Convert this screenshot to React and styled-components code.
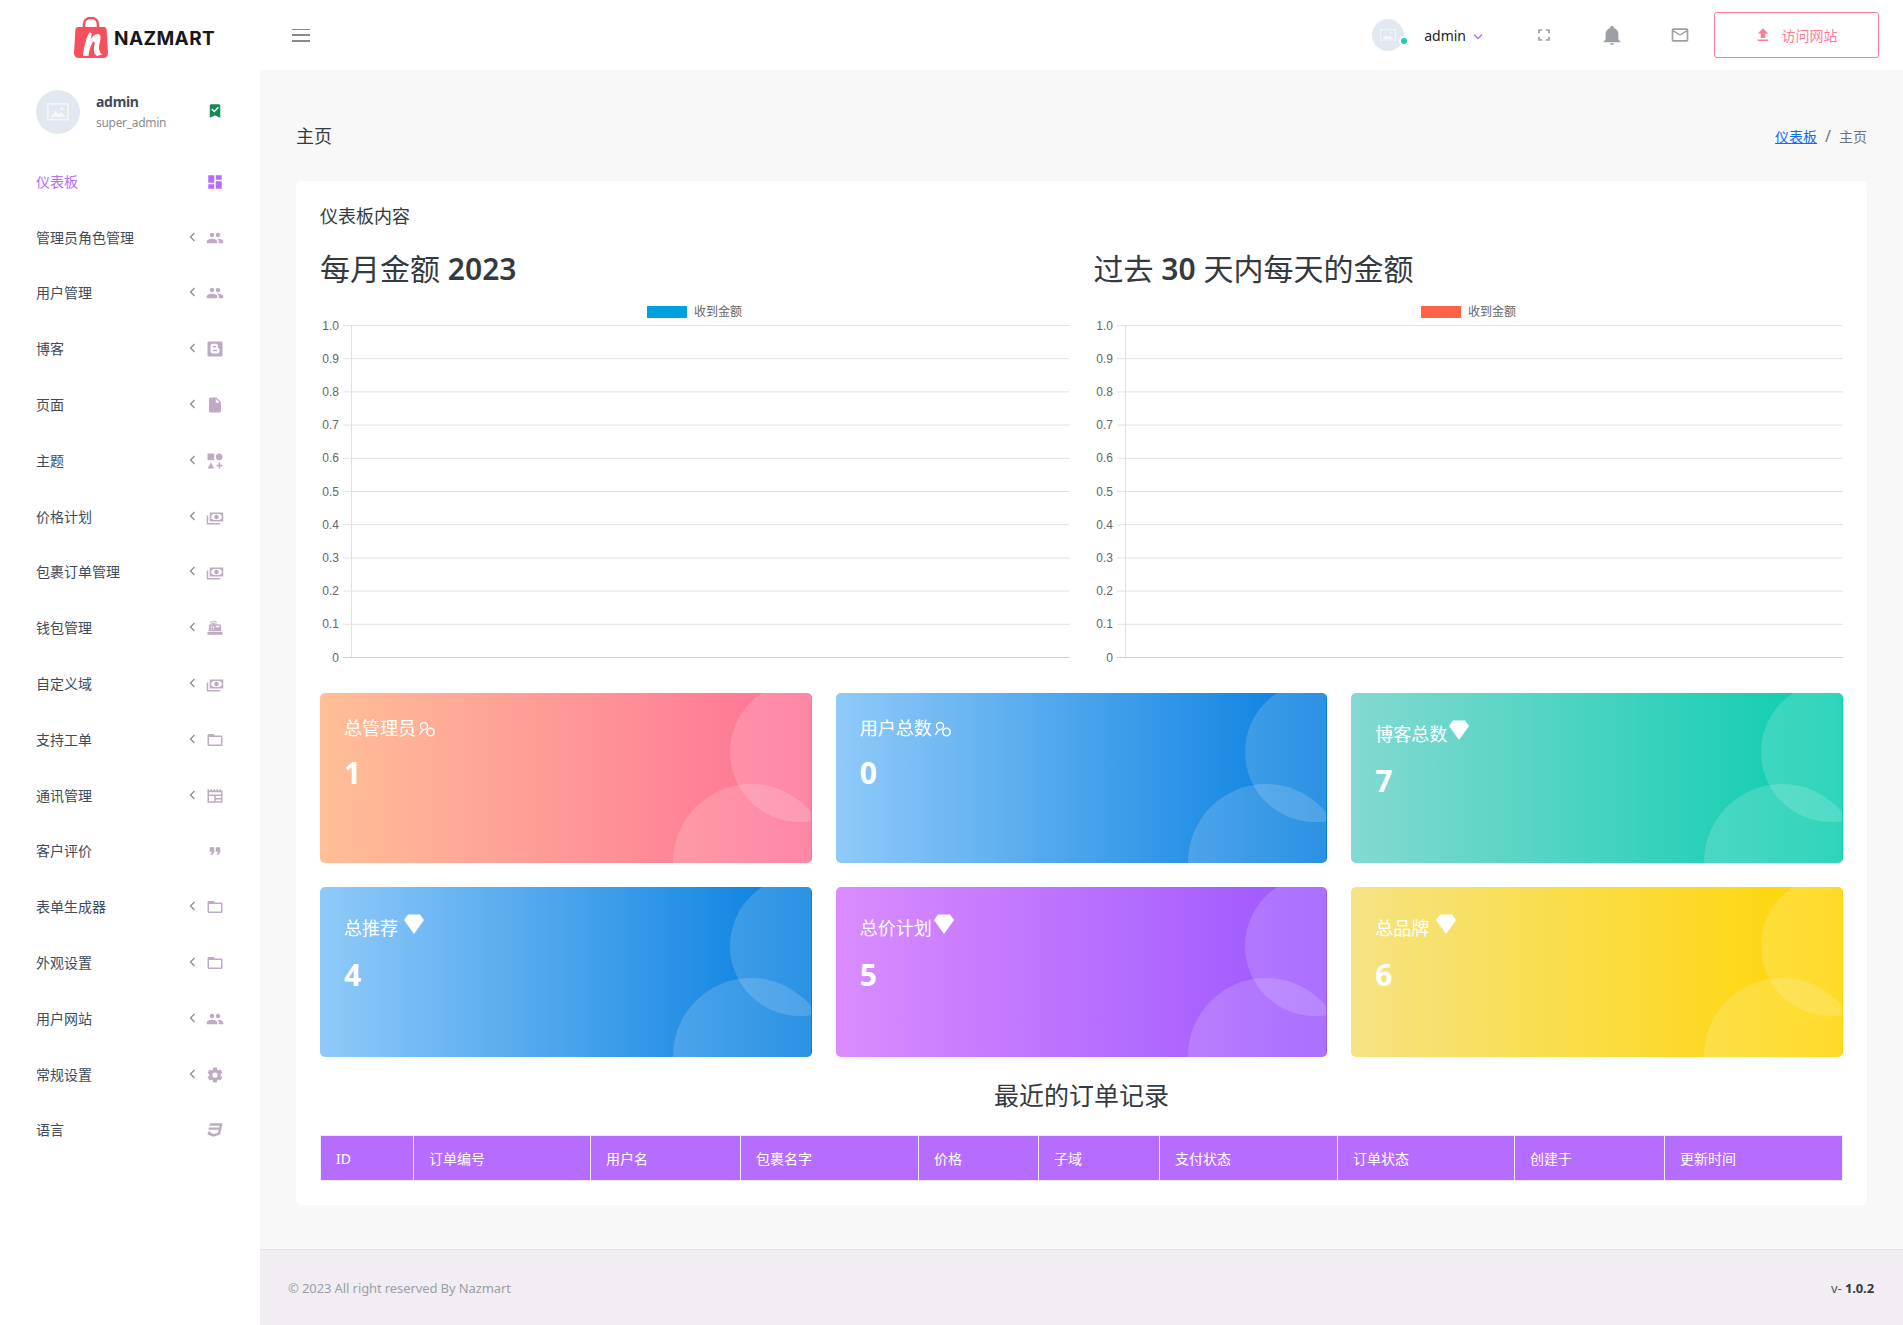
import styled, { createGlobalStyle } from 'styled-components'

const GlobalStyle = createGlobalStyle`
    * { box-sizing: border-box; }
    body {
        margin: 0;
        background: #f8f8f8;
        font-family: "Noto Sans", "Noto Sans CJK SC", sans-serif;
        color: #343a40;
    }
`;

const icons = {
    dashboard: 'M13,3V9H21V3M13,21H21V11H13M3,21H11V15H3M3,13H11V3H3V13Z',
    people: 'M16 11c1.66 0 2.99-1.34 2.99-3S17.66 5 16 5c-1.66 0-3 1.34-3 3s1.34 3 3 3zm-8 0c1.66 0 2.99-1.34 2.99-3S9.66 5 8 5C6.34 5 5 6.34 5 8s1.34 3 3 3zm0 2c-2.33 0-7 1.17-7 3.5V19h14v-2.5c0-2.33-4.67-3.5-7-3.5zm8 0c-.29 0-.62.02-.97.05 1.16.84 1.97 1.97 1.97 3.45V19h6v-2.5c0-2.33-4.67-3.5-7-3.5z',
    blogger: 'M14,13H9.95A1,1 0 0,0 8.95,14A1,1 0 0,0 9.95,15H14A1,1 0 0,0 15,14A1,1 0 0,0 14,13M9.95,10H12.55A1,1 0 0,0 13.55,9A1,1 0 0,0 12.55,8H9.95A1,1 0 0,0 8.95,9A1,1 0 0,0 9.95,10M16,9V10A1,1 0 0,0 17,11A1,1 0 0,1 18,12V15A3,3 0 0,1 15,18H9A3,3 0 0,1 6,15V8A3,3 0 0,1 9,5H13A3,3 0 0,1 16,8M20,2H4C2.89,2 2,2.89 2,4V20A2,2 0 0,0 4,22H20A2,2 0 0,0 22,20V4C22,2.89 21.1,2 20,2Z',
    file: 'M13,9V3.5L18.5,9M6,2C4.89,2 4,2.89 4,4V20A2,2 0 0,0 6,22H18A2,2 0 0,0 20,20V8L14,2H6Z',
    shapes: 'M2,2H11V11H2V2M17.5,2C20,2 22,4 22,6.5C22,9 20,11 17.5,11C15,11 13,9 13,6.5C13,4 15,2 17.5,2M6.5,14L11,22H2L6.5,14M19,17H22V19H19V22H17V19H14V17H17V14H19V17Z',
    cash: 'M5,6H23V18H5V6M14,9A3,3 0 0,1 17,12A3,3 0 0,1 14,15A3,3 0 0,1 11,12A3,3 0 0,1 14,9M9,8A2,2 0 0,1 7,10V14A2,2 0 0,1 9,16H19A2,2 0 0,1 21,14V10A2,2 0 0,1 19,8H9M1,10H3V20H19V22H1V10Z',
    register: 'M2,17H22V21H2V17M6.25,7H9V6H6V3H14V6H11V7H17.8C18.8,7 19.8,8 20,9L20.5,16H3.5L4.05,9C4.1,8 5.05,7 6.25,7M13,9V11H18V9H13M6,9V10H8V9H6M9,9V10H11V9H9M6,11V12H8V11H6M9,11V12H11V11H9M6,13V14H8V13H6M9,13V14H11V13H9M7,4V5H13V4H7Z',
    folder: 'M20,18H4V8H20M20,6H12L10,4H4C2.89,4 2,4.89 2,6V18A2,2 0 0,0 4,20H20A2,2 0 0,0 22,18V8C22,6.89 21.1,6 20,6Z',
    news: 'M2,3H4V4.5H6V3H8V4.5H10V3H12V4.5H14V3H16V4.5H18V3H20V4.5H22V21H2V3M4,7V10H20V7H4M4,12V19H11V12H4M13,12V14.5H20V12H13M13,16.5V19H20V16.5H13Z',
    quote: 'M14,17H17L19,13V7H13V13H16M6,17H9L11,13V7H5V13H8L6,17Z',
    settings: 'M12,15.5A3.5,3.5 0 0,1 8.5,12A3.5,3.5 0 0,1 12,8.5A3.5,3.5 0 0,1 15.5,12A3.5,3.5 0 0,1 12,15.5M19.43,12.97C19.47,12.65 19.5,12.33 19.5,12C19.5,11.67 19.47,11.34 19.43,11L21.54,9.37C21.73,9.22 21.78,8.95 21.66,8.73L19.66,5.27C19.54,5.05 19.27,4.96 19.05,5.05L16.56,6.05C16.04,5.66 15.5,5.32 14.87,5.07L14.5,2.42C14.46,2.18 14.25,2 14,2H10C9.75,2 9.54,2.18 9.5,2.42L9.13,5.07C8.5,5.32 7.96,5.66 7.44,6.05L4.95,5.05C4.73,4.96 4.46,5.05 4.34,5.27L2.34,8.73C2.21,8.95 2.27,9.22 2.46,9.37L4.57,11C4.53,11.34 4.5,11.67 4.5,12C4.5,12.33 4.53,12.65 4.57,12.97L2.46,14.63C2.27,14.78 2.21,15.05 2.34,15.27L4.34,18.73C4.46,18.95 4.73,19.03 4.95,18.95L7.44,17.94C7.96,18.34 8.5,18.68 9.13,18.93L9.5,21.58C9.54,21.82 9.75,22 10,22H14C14.25,22 14.46,21.82 14.5,21.58L14.87,18.93C15.5,18.67 16.04,18.34 16.56,17.94L19.05,18.95C19.27,19.03 19.54,18.95 19.66,18.73L21.66,15.27C21.78,15.05 21.73,14.78 21.54,14.63L19.43,12.97Z',
    css: 'M5,3L4.35,6.34H17.94L17.5,8.5H3.92L3.26,11.83H16.85L16.09,15.64L10.61,17.45L5.86,15.64L6.19,14H2.85L2.06,18L9.91,21L18.96,18L20.16,11.97L20.4,10.76L21.94,3H5Z',
    bookmark: 'M17,3A2,2 0 0,1 19,5V21L12,18L5,21V5C5,3.89 5.9,3 7,3H17M11,14L17.25,7.76L15.84,6.34L11,11.18L8.41,8.59L7,10L11,14Z',
    bell: 'M21,19V20H3V19L5,17V11C5,7.9 7.03,5.17 10,4.29C10,4.19 10,4.1 10,4A2,2 0 0,1 12,2A2,2 0 0,1 14,4C14,4.1 14,4.19 14,4.29C16.97,5.17 19,7.9 19,11V17L21,19M14,21A2,2 0 0,1 12,23A2,2 0 0,1 10,21',
    mail: 'M22,6C22,4.9 21.1,4 20,4H4C2.9,4 2,4.9 2,6V18C2,19.1 2.9,20 4,20H20C21.1,20 22,19.1 22,18V6M20,6L12,11L4,6H20M20,18H4V8L12,13L20,8V18Z',
    fullscreen: 'M5,5H10V7H7V10H5V5M14,5H19V10H17V7H14V5M17,14H19V19H14V17H17V14M10,17V19H5V14H7V17H10Z',
    upload: 'M9,16V10H5L12,3L19,10H15V16H9M5,20V18H19V20H5Z',
    diamond: 'M6,2.5H18L22,8L12,22L2,8L6,2.5Z',
};

const menu = [
    { label: '仪表板', icon: 'dashboard', active: true },
    { label: '管理员角色管理', icon: 'people', sub: true },
    { label: '用户管理', icon: 'people', sub: true },
    { label: '博客', icon: 'blogger', sub: true },
    { label: '页面', icon: 'file', sub: true },
    { label: '主题', icon: 'shapes', sub: true },
    { label: '价格计划', icon: 'cash', sub: true },
    { label: '包裹订单管理', icon: 'cash', sub: true },
    { label: '钱包管理', icon: 'register', sub: true },
    { label: '自定义域', icon: 'cash', sub: true },
    { label: '支持工单', icon: 'folder', sub: true },
    { label: '通讯管理', icon: 'news', sub: true },
    { label: '客户评价', icon: 'quote' },
    { label: '表单生成器', icon: 'folder', sub: true },
    { label: '外观设置', icon: 'folder', sub: true },
    { label: '用户网站', icon: 'people', sub: true },
    { label: '常规设置', icon: 'settings', sub: true },
    { label: '语言', icon: 'css' },
];

const gradients = {
    danger: 'linear-gradient(to right, #ffbf96, #fe7096)',
    info: 'linear-gradient(to right, #90caf9, #047edf 99%)',
    success: 'linear-gradient(to right, #84d9d2, #07cdae)',
    purple: 'linear-gradient(to right, #da8cff, #9a55ff)',
    warning: 'linear-gradient(to right, #f6e384, #ffd500)',
};

const stats = [
    { title: '总管理员', value: 1, tone: 'danger', icon: 'users' },
    { title: '用户总数', value: 0, tone: 'info', icon: 'users' },
    { title: '博客总数', value: 7, tone: 'success', icon: 'gem', gap: 0 },
    { title: '总推荐', value: 4, tone: 'info', icon: 'gem', gap: 4 },
    { title: '总价计划', value: 5, tone: 'purple', icon: 'gem', gap: 0 },
    { title: '总品牌', value: 6, tone: 'warning', icon: 'gem', gap: 5 },
];

const columns = [
    ['ID', 93], ['订单编号', 177], ['用户名', 150], ['包裹名字', 178], ['价格', 120],
    ['子域', 121], ['支付状态', 178], ['订单状态', 177], ['创建于', 150], ['更新时间', 178],
];

const Page = styled.div`
    min-height: 1325px;
    display: flex;
    flex-direction: column;
`;

const TopBar = styled.header`
    height: 70px;
    background: #fff;
    display: flex;
    align-items: center;
`;

const Brand = styled.div`
    width: 260px;
    padding-left: 74px;
    display: flex;
    align-items: center;
    gap: 6px;
    height: 100%;
    padding-top: 5px;
`;

const BrandName = styled.span`
    font-family: Inter, "Noto Sans", sans-serif;
    font-weight: 700;
    font-size: 19px;
    letter-spacing: 0.4px;
    color: #16181c;
    margin-top: 1px;
`;

const NavBar = styled.div`
    flex: 1;
    display: flex;
    align-items: center;
    height: 100%;
    padding: 0 24px 0 32px;
`;

const Hamburger = styled.button`
    width: 18px;
    height: 13px;
    padding: 0;
    border: 0;
    background: none;
    display: flex;
    flex-direction: column;
    justify-content: space-between;

    span {
        display: block;
        height: 1.6px;
        background: #8a8a8a;
    }
`;

const NavRight = styled.div`
    margin-left: auto;
    display: flex;
    align-items: center;
`;

const Avatar = styled.span`
    position: relative;
    width: ${({ size }) => size}px;
    height: ${({ size }) => size}px;
    border-radius: 50%;
    background: #e2e8f0;
    display: flex;
    align-items: center;
    justify-content: center;
    flex: none;
`;

const OnlineDot = styled.span`
    position: absolute;
    right: -5px;
    bottom: 5px;
    background: #1bcfb4;
    border-radius: 50%;
    border: 2px solid #fff;
    box-sizing: content-box;
    width: 6px;
    height: 6px;
`;

const NavUser = styled.span`
    font-size: 14px;
    color: #222;
    margin-left: 20px;
`;

const Caret = styled.svg`
    width: 10px;
    height: 7px;
    margin: 2px 27px 0 7px;
`;

const NavIcon = styled.svg`
    width: ${({ size }) => size || 20}px;
    height: ${({ size }) => size || 20}px;
    fill: #9c9fa6;
    display: block;
`;

const NavIconSlot = styled.span`
    width: 68px;
    display: flex;
    justify-content: center;
`;

const VisitButton = styled.a`
    width: 165px;
    height: 46px;
    border: 1px solid #fe7c96;
    border-radius: 3px;
    color: #fe7c96;
    font-size: 14px;
    display: flex;
    align-items: center;
    justify-content: center;
    gap: 10px;
    padding-right: 2px;

    svg {
        width: 18px;
        height: 18px;
        fill: #fe7c96;
    }
`;

const Body = styled.div`
    flex: 1;
    display: flex;
`;

const Sidebar = styled.aside`
    width: 260px;
    flex: none;
    background: #fff;
`;

const Profile = styled.div`
    height: 84px;
    padding: 20px 36px 0 36px;
    display: flex;
    align-items: flex-start;
`;

const ProfileText = styled.div`
    margin-left: 16px;
    flex: 1;
    padding-top: 2px;
`;

const ProfileName = styled.div`
    font-size: 14px;
    font-weight: 700;
    line-height: 20px;
    letter-spacing: -0.3px;
    color: #3e4b5b;
`;

const ProfileRole = styled.div`
    font-size: 12px;
    line-height: 16px;
    margin-top: 3px;
    letter-spacing: -0.3px;
    color: #8a8d93;
`;

const BookmarkIcon = styled.svg`
    width: 18px;
    height: 18px;
    fill: #198754;
    margin-top: 12px;
`;

const MenuList = styled.ul`
    list-style: none;
    margin: 0;
    padding: 0;
`;

const MenuItem = styled.li`
    height: 55.8px;
    padding: 0 36px;
    display: flex;
    align-items: center;
    font-size: 14px;
    color: ${({ active }) => active ? '#b66dff' : '#3e4b5b'};
`;

const MenuLabel = styled.span`
    flex: 1;
    margin-bottom: 2px;
`;

const MenuChevron = styled.svg`
    width: 7px;
    height: 10px;
    margin-right: 10px;
    margin-top: -2px;
    fill: none;
    stroke: #8e8e8e;
    stroke-width: 1.3;
`;

const MenuIcon = styled.svg`
    width: 18px;
    height: 18px;
    fill: ${({ active }) => active ? '#b66dff' : '#bfaac4'};
`;

const Main = styled.main`
    flex: 1;
    min-width: 0;
    display: flex;
    flex-direction: column;
`;

const Content = styled.div`
    flex: 1;
    padding: 54px 36px 30px;
`;

const PageHeader = styled.div`
    display: flex;
    align-items: center;
    justify-content: space-between;
    height: 24px;
    margin-bottom: 33px;
`;

const PageTitle = styled.h3`
    margin: -2px 0 0;
    font-size: 18px;
    font-weight: 400;
    color: #343a40;
`;

const Breadcrumb = styled.div`
    display: flex;
    align-items: center;
    font-size: 14px;
    color: #6c757d;

    a {
        color: #0d6efd;
        text-decoration: underline;
    }

    i {
        font-style: normal;
        font-size: 16px;
        margin: 0 8px;
    }
`;

const Card = styled.section`
    background: #fff;
    border-radius: 5px;
    padding: 24px;
`;

const CardTitle = styled.h4`
    margin: 0;
    font-size: 18px;
    font-weight: 400;
    line-height: 22px;
    color: #343a40;
`;

const ChartRow = styled.div`
    display: grid;
    grid-template-columns: 1fr 1fr;
    gap: 24px;
    margin-top: 22px;
`;

const ChartTitle = styled.h2`
    margin: 0;
    font-size: 30px;
    font-weight: 400;
    line-height: 40px;
    color: #343a40;

    b {
        font-weight: 600;
    }
`;

const ChartSvg = styled.svg`
    display: block;
    width: 100%;
    height: 368px;
    margin-top: 12px;
    font-family: "Liberation Sans", "Noto Sans CJK SC", sans-serif;
    font-size: 12px;
`;

const StatGrid = styled.div`
    display: grid;
    grid-template-columns: repeat(3, 1fr);
    gap: 24px;
    margin-top: 24px;
`;

const StatCard = styled.div`
    position: relative;
    height: 170px;
    padding: 24px;
    border-radius: 5px;
    overflow: hidden;
    color: #fff;
    background: ${({ tone }) => gradients[tone]};
`;

const Bubbles = styled.div`
    position: absolute;
    inset: 0 1px 0 0;
    overflow: hidden;
    pointer-events: none;

    &::before, &::after {
        content: '';
        position: absolute;
        border-radius: 50%;
        background: rgba(255, 255, 255, 0.16);
    }

    &::before {
        width: 140px;
        height: 140px;
        left: calc(100% - 81px);
        top: -11px;
    }

    &::after {
        width: 156px;
        height: 156px;
        left: calc(100% - 138px);
        top: 91px;
    }
`;

const StatTitle = styled.div`
    position: relative;
    display: flex;
    align-items: center;
    height: ${({ tall }) => tall ? 30 : 22}px;
    padding-top: ${({ tall }) => tall ? 3 : 0}px;
    font-size: 18px;
    line-height: 22px;
`;

const StatNumber = styled.div`
    position: relative;
    font-size: 30px;
    font-weight: 700;
    line-height: 36px;
    margin-top: 16px;
`;

const Gem = styled.svg`
    width: 24px;
    height: 24px;
    fill: #fff;
    flex: none;
    margin-top: -7px;
    margin-left: ${({ gap }) => gap}px;
`;

const UsersIcon = styled.svg`
    width: 16px;
    height: 16px;
    fill: none;
    stroke: #fff;
    stroke-width: 1.3;
    margin-left: 3px;
    margin-top: 2px;
`;

const OrdersTitle = styled.h2`
    margin: 21px 0 0;
    font-size: 25px;
    font-weight: 400;
    line-height: 34px;
    text-align: center;
    color: #343a40;
`;

const OrdersTable = styled.table`
    width: 100%;
    margin-top: 23px;
    border-collapse: collapse;
    table-layout: fixed;
`;

const HeadCell = styled.th`
    width: ${({ w }) => w}px;
    height: 45px;
    padding: 0 15px;
    text-align: left;
    font-size: 14px;
    font-weight: 400;
    color: #fff;
    background: #b66dff;
    border: 1px solid #ebedf2;
`;

const Footer = styled.footer`
    height: 76px;
    background: #f2edf3;
    border-top: 1px solid #e7e2e9;
    padding: 0 29px 0 28px;
    display: flex;
    align-items: center;
    justify-content: space-between;
    font-size: 13px;
    letter-spacing: -0.1px;
    color: #9c9fa6;
`;

const Version = styled.span`
    color: #555;

    b {
        color: #343a40;
    }
`;

const LogoSvg = styled.svg`
    width: 34px;
    height: 41px;
    flex: none;
`;

const ticks = ['1.0', '0.9', '0.8', '0.7', '0.6', '0.5', '0.4', '0.3', '0.2', '0.1', '0'];

// empty chart.js style line chart, only the grid and legend are there
const Chart = ({ color }) => {
    const top = 24
    const step = 33.2
    const width = 749.5
    return (
        <ChartSvg viewBox={`0 0 ${width} 368`} preserveAspectRatio="none">
            <rect x="327" y="5" width="40" height="12" fill={color} />
            <text x="374" y="15" fill="#666">收到金额</text>
            <line x1="31.5" x2="31.5" y1={top} y2={top + step * 10} stroke="#e2e2e2" />
            {ticks.map((tick, i) => (
                <g key={tick}>
                    <line x1="23" x2={width} y1={top + step * i + 0.5} y2={top + step * i + 0.5} stroke={i === 10 ? '#cfcfcf' : '#e2e2e2'} />
                    <text x="19" y={top + step * i + 4.5} fill="#666" textAnchor="end">{tick}</text>
                </g>
            ))}
        </ChartSvg>
    )
}

const Logo = () => (
    <LogoSvg viewBox="0 0 34 41">
        <path d="M10 11V7.5C10 3.5 13 1 17 1C21 1 24 3.5 24 7.5V11" fill="none" stroke="#f2505d" strokeWidth="2.6" />
        <path d="M4 10H30C31.5 10 32.5 11 32.6 12.5L34 36C34 39 32 41 29 41H5C2 41 0 39 0 36L1.4 12.5C1.5 11 2.5 10 4 10Z" fill="#f6505e" />
        <path d="M9 39C9.5 32 12 22 14.5 17C15.5 15 18 15 17.5 18L16.5 22C19.5 17.5 24 15.5 26 18C27.5 20 25.5 26 25 30C24.7 33 26 36 28 37.5L23 39C19.5 37 19.5 32 20.5 27C21 24.5 20 23.5 18.5 25.5C16.5 28.5 15 34 14.5 39H9Z" fill="#fff" />
    </LogoSvg>
)

const ImagePlaceholder = ({ size }) => (
    <svg width={size} height={size * 0.8} viewBox="0 0 20 16">
        <rect x="0.8" y="0.8" width="18.4" height="14.4" fill="none" stroke="#f4f6f9" strokeWidth="1.4" />
        <path d="M3 13L7.5 7L10.5 10L13 8L17 13Z" fill="#f4f6f9" />
        <circle cx="13.5" cy="5" r="1.4" fill="#f4f6f9" />
    </svg>
)

const Icon = ({ as: Comp, name, ...rest }) => (
    <Comp viewBox="0 0 24 24" {...rest}><path d={icons[name]} /></Comp>
)

const Stat = ({ stat }) => {
    const tall = stat.icon === 'gem'
    return (
        <StatCard tone={stat.tone}>
            <Bubbles />
            <StatTitle tall={tall}>
                {stat.title}
                {tall
                    ? <Gem viewBox="0 0 24 24" gap={stat.gap}><path d={icons.diamond} /></Gem>
                    : (
                        <UsersIcon viewBox="0 0 16 16">
                            <circle cx="5" cy="5" r="3.5" />
                            <path d="M0.7 14C1 11.5 2.5 10 4.5 9" />
                            <circle cx="11.5" cy="11" r="3.7" strokeWidth="1.5" />
                        </UsersIcon>
                    )}
            </StatTitle>
            <StatNumber>{stat.value}</StatNumber>
        </StatCard>
    )
}

const App = () => {
    return (
        <Page>
            <GlobalStyle />
            <TopBar>
                <Brand>
                    <Logo />
                    <BrandName>NAZMART</BrandName>
                </Brand>
                <NavBar>
                    <Hamburger><span /><span /><span /></Hamburger>
                    <NavRight>
                        <Avatar size={32}>
                            <ImagePlaceholder size={16} />
                            <OnlineDot />
                        </Avatar>
                        <NavUser>admin</NavUser>
                        <Caret viewBox="0 0 10 7"><path d="M1 1.5L5 5.5L9 1.5" fill="none" stroke="#b66dff" strokeWidth="1.4" /></Caret>
                        <NavIconSlot><Icon as={NavIcon} name="fullscreen" /></NavIconSlot>
                        <NavIconSlot><Icon as={NavIcon} name="bell" size={22} /></NavIconSlot>
                        <NavIconSlot><Icon as={NavIcon} name="mail" /></NavIconSlot>
                        <VisitButton>
                            <svg viewBox="0 0 24 24"><path d={icons.upload} /></svg>
                            访问网站
                        </VisitButton>
                    </NavRight>
                </NavBar>
            </TopBar>
            <Body>
                <Sidebar>
                    <Profile>
                        <Avatar size={44}><ImagePlaceholder size={22} /></Avatar>
                        <ProfileText>
                            <ProfileName>admin</ProfileName>
                            <ProfileRole>super_admin</ProfileRole>
                        </ProfileText>
                        <Icon as={BookmarkIcon} name="bookmark" />
                    </Profile>
                    <MenuList>
                        {menu.map(item => (
                            <MenuItem key={item.label} active={item.active}>
                                <MenuLabel>{item.label}</MenuLabel>
                                {item.sub && <MenuChevron viewBox="0 0 7 10"><path d="M5.5 1L1.5 5L5.5 9" /></MenuChevron>}
                                <Icon as={MenuIcon} name={item.icon} active={item.active} />
                            </MenuItem>
                        ))}
                    </MenuList>
                </Sidebar>
                <Main>
                    <Content>
                        <PageHeader>
                            <PageTitle>主页</PageTitle>
                            <Breadcrumb><a>仪表板</a><i>/</i>主页</Breadcrumb>
                        </PageHeader>
                        <Card>
                            <CardTitle>仪表板内容</CardTitle>
                            <ChartRow>
                                <div>
                                    <ChartTitle>每月金额 <b>2023</b></ChartTitle>
                                    <Chart color="#009fdf" />
                                </div>
                                <div>
                                    <ChartTitle>过去 <b>30</b> 天内每天的金额</ChartTitle>
                                    <Chart color="#ff6347" />
                                </div>
                            </ChartRow>
                            <StatGrid>
                                {stats.map(stat => <Stat key={stat.title} stat={stat} />)}
                            </StatGrid>
                            <OrdersTitle>最近的订单记录</OrdersTitle>
                            <OrdersTable>
                                <thead>
                                    <tr>
                                        {columns.map(([name, w]) => <HeadCell key={name} w={w}>{name}</HeadCell>)}
                                    </tr>
                                </thead>
                            </OrdersTable>
                        </Card>
                    </Content>
                    <Footer>
                        <span>© 2023 All right reserved By Nazmart</span>
                        <Version>v- <b>1.0.2</b></Version>
                    </Footer>
                </Main>
            </Body>
        </Page>
    )
}

export default App
